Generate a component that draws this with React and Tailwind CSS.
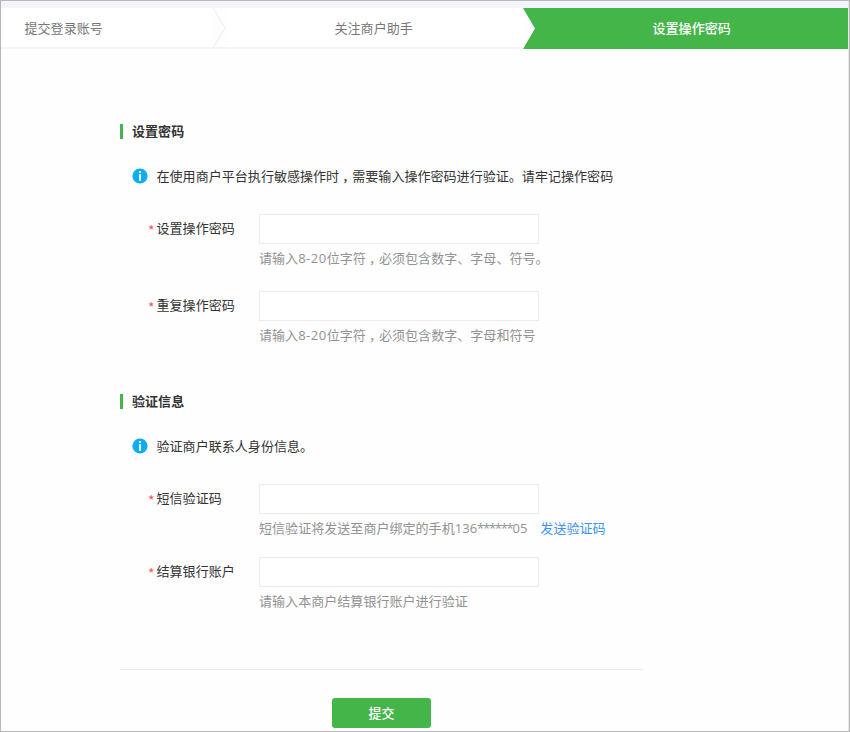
import React from 'react';

function Comma() {
  return <span className="ml-[3px] tracking-[-3px]">，</span>;
}

function Latin({ children }) {
  return <span className="font-['Open_Sans',sans-serif] tracking-[0.5px]">{children}</span>;
}

function Steps() {
  return (
    <nav className="flex h-[41px] text-[#777]">
      <div className="flex h-[41px] w-[210px] items-center border-b-2 border-[#f3f3f8] bg-white pl-[23.5px]">提交登录账号</div>
      <svg className="h-[41px] w-[16px] shrink-0" viewBox="0 0 16 41" fill="none">
        <path d="M0 40H16" stroke="#f3f3f8" strokeWidth="2" />
        <path d="M2 0L14 20L2 40" stroke="#efeff2" strokeWidth="1.2" />
      </svg>
      <div className="flex h-[41px] w-[296px] items-center border-b-2 border-[#f3f3f8] bg-white pl-[107.5px]">关注商户助手</div>
      <div className="flex h-[41px] w-[325px] items-center bg-[#44b549] pb-[2px] pl-[129.5px] font-medium text-white [clip-path:polygon(0_0,100%_0,100%_100%,0_100%,12px_50%)]">
        设置操作密码
      </div>
    </nav>
  );
}

function Heading({ children }) {
  return (
    <h2 className="flex h-[15px] items-center border-l-[3px] border-[#44b549] pb-[2px] pl-[9px] font-bold text-[#333]">
      {children}
    </h2>
  );
}

function Info({ children }) {
  return (
    <div className="mt-[29px] flex h-[16px] items-center pl-[12px] text-[#333]">
      <svg className="mr-[8.5px] h-[16px] w-[16px] shrink-0" viewBox="0 0 16 16">
        <circle cx="8" cy="8" r="7.6" fill="#08aef0" />
        <rect x="7" y="3" width="2" height="2" fill="#fff" />
        <rect x="7" y="6.2" width="2" height="6.6" fill="#fff" />
      </svg>
      <p className="whitespace-nowrap">{children}</p>
    </div>
  );
}

function Field({ label, children }) {
  return (
    <div className="flex">
      <label className="flex h-[28px] w-[139px] shrink-0 items-center pl-[28px] text-[#333]">
        <span className="w-[8.5px] shrink-0 pt-[3px] text-[14px] leading-none text-[#ee5a60]">*</span>
        {label}
      </label>
      <div>
        <input className="block h-[30px] w-[280px] border border-[#ebebeb] bg-white px-2 outline-none" />
        <p className="mt-[4px] h-[20px] whitespace-nowrap leading-[20px] text-[#929292]">{children}</p>
      </div>
    </div>
  );
}

export default function App() {
  return (
    <div className="h-[732px] w-[850px] overflow-hidden border border-[#b8b8b8] bg-[#fefefe] font-['Noto_Sans_CJK_SC',sans-serif] text-[13.05px]">
      <div className="flex h-full">
        <div className="w-[847px] shrink-0">
          <div className="h-[7px] bg-[#f3f3fa]" />
          <Steps />
          <main className="ml-[119px] w-[523px] pt-[75px]">
            <Heading>设置密码</Heading>
            <Info>在使用商户平台执行敏感操作时<Comma />需要输入操作密码进行验证。请牢记操作密码</Info>
            <div className="mt-[30px] flex flex-col gap-[23px]">
              <Field label="设置操作密码">
                请输入<Latin>8-20</Latin>位字符<Comma />必须包含数字、字母、符号。
              </Field>
              <Field label="重复操作密码">
                请输入<Latin>8-20</Latin>位字符<Comma />必须包含数字、字母和符号
              </Field>
            </div>
            <div className="mt-[49px]">
              <Heading>验证信息</Heading>
            </div>
            <Info>验证商户联系人身份信息。</Info>
            <div className="mt-[30px] flex flex-col gap-[19px]">
              <Field label="短信验证码">
                短信验证将发送至商户绑定的手机
                <span className="font-['Open_Sans',sans-serif]">136<span className="tracking-[-1.3px]">******</span>05</span>
                <a className="ml-[13px] text-[#3d94ef]">发送验证码</a>
              </Field>
              <Field label="结算银行账户">请输入本商户结算银行账户进行验证</Field>
            </div>
            <div className="mt-[58px] h-px bg-[#ececec]" />
            <button className="ml-[212px] mt-[28px] block h-[30px] w-[99px] rounded-[3px] bg-[#44b549] font-medium text-white">
              提交
            </button>
          </main>
        </div>
        <div className="h-full w-px bg-[#e6e6e6]" />
      </div>
    </div>
  );
}
